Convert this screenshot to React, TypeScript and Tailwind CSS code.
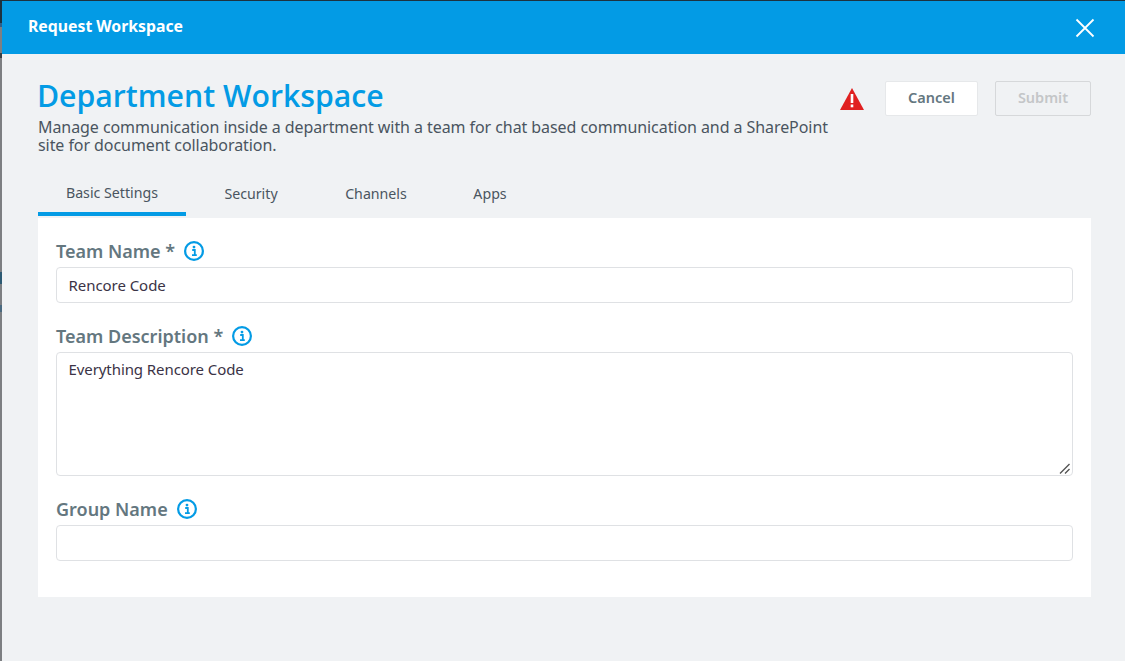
import React from "react";

const InfoIcon = () => (
  <svg width="20" height="20" viewBox="0 0 20 20" className="shrink-0">
    <circle cx="10" cy="10" r="8.900" fill="none" stroke="#039be5" strokeWidth="2.200" />
    <circle cx="10" cy="6.100" r="1.400" fill="#039be5" />
    <path d="M8.200 9h2.600v5M8 14.200h4.800" fill="none" stroke="#039be5" strokeWidth="1.800" />
  </svg>
);

const FieldLabel = ({ text }: { text: string }) => (
  <div className="flex items-center gap-[9px] h-[24px] mb-[4px]">
    <span className="text-[18px] font-semibold leading-[24px] text-[#64777f]">{text}</span>
    <InfoIcon />
  </div>
);

const tabs = [
  { name: "Basic Settings", width: "w-[148px]", active: true },
  { name: "Security", width: "w-[130px]", active: false },
  { name: "Channels", width: "w-[120px]", active: false },
  { name: "Apps", width: "w-[108px]", active: false },
];

const inputClass =
  "block w-full h-[36px] pl-[11.500px] pr-[12px] bg-white border border-[#dfe1e4] rounded-[4px] text-[15px] text-[#3b3346] outline-none tracking-[-0.05px]";

export default function App() {
  return (
    <div className="w-[1125px] h-[661px] overflow-hidden flex bg-[#f0f2f4] font-['Noto_Sans',sans-serif]">
      <div className="w-[2px] flex flex-col bg-[#7d7f82]">
        <div className="h-[23px] bg-[#1d3240]" />
        <div className="h-[4px] bg-[#2f5f8a]" />
        <div className="h-[26px]" />
        <div className="h-[5px] bg-[#3a3f44]" />
        <div className="h-[214px]" />
        <div className="h-[12px] bg-[#2c5a73]" />
        <div className="h-[21px]" />
        <div className="h-[7px] bg-[#4a6a80]" />
      </div>
      <div className="flex-1 flex flex-col">
        <div className="h-[1px] bg-[#1d3240]" />
        <header className="h-[53px] bg-[#039be5] flex items-center justify-between pl-[26px] pr-[30px]">
          <h1 className="text-[15.800px] font-bold text-white leading-[20px] mb-[4px]">Request Workspace</h1>
          <svg width="20" height="20" viewBox="0 0 20 20" className="text-white">
            <path d="M1.500 1.500l17 17M18.500 1.500l-17 17" stroke="currentColor" strokeWidth="1.800" fill="none" />
          </svg>
        </header>
        <main className="flex-1 pl-[36px] pr-[34px]">
          <div className="flex justify-between items-start">
            <div className="w-[800px] pt-[22px]">
              <h2 className="text-[30.200px] leading-[40px] font-semibold text-[#039be5] font-['Open_Sans',sans-serif] -ml-[1px]">Department Workspace</h2>
              <p className="text-[16px] leading-[18px] text-[#4a5560] mt-[2px] tracking-[-0.07px]">
                Manage communication inside a department with a team for chat based communication and a SharePoint site for document collaboration.
              </p>
            </div>
            <div className="flex items-center pt-[27px]">
              <svg width="26" height="24" viewBox="0 0 26 24" className="mr-[20px]">
                <path d="M13 1L25 23H1Z" fill="#e02020" />
                <rect x="11.700" y="7" width="2.600" height="9" fill="#fff" />
                <rect x="11.700" y="17.500" width="2.600" height="2.800" fill="#fff" />
              </svg>
              <button className="w-[93px] h-[35px] bg-white border border-[#e6e8ea] rounded-[2px] text-[14.500px] font-semibold text-[#64777f] mr-[17px] pb-[1px]">
                Cancel
              </button>
              <button className="w-[96px] h-[35px] border border-[#d6d8da] rounded-[2px] text-[14.500px] font-semibold text-[#c4c6c8] pb-[1px]">
                Submit
              </button>
            </div>
          </div>
          <nav className="flex mt-[18px] h-[44px]">
            {tabs.map((tab) => (
              <div
                key={tab.name}
                className={`${tab.width} flex justify-center text-[14.200px] leading-[20px] text-[#4a5560] ${tab.active ? "pt-[11px] border-b-4 border-[#039be5]" : "pt-[12px]"}`}
              >
                {tab.name}
              </div>
            ))}
          </nav>
          <section className="mt-[2px] bg-white px-[18px] pt-[21px] pb-[36px]">
            <FieldLabel text="Team Name *" />
            <input className={inputClass} value="Rencore Code" readOnly />
            <div className="mt-[21px]">
              <FieldLabel text="Team Description *" />
              <div className="relative">
                <textarea
                  className="block w-full h-[124px] pl-[11.500px] pr-[12px] py-[5px] bg-white border border-[#dfe1e4] rounded-[4px] text-[15px] text-[#3b3346] outline-none resize-none tracking-[-0.08px]"
                  value="Everything Rencore Code"
                  readOnly
                />
                <svg width="12" height="12" viewBox="0 0 12 12" className="absolute right-[2px] bottom-[1px]">
                  <path d="M1 10.500L10.500 1M6 10.500L10.500 6" stroke="#555" strokeWidth="1.400" fill="none" />
                </svg>
              </div>
            </div>
            <div className="mt-[21px]">
              <FieldLabel text="Group Name" />
              <input className={inputClass} value="" readOnly />
            </div>
          </section>
        </main>
      </div>
    </div>
  );
}
